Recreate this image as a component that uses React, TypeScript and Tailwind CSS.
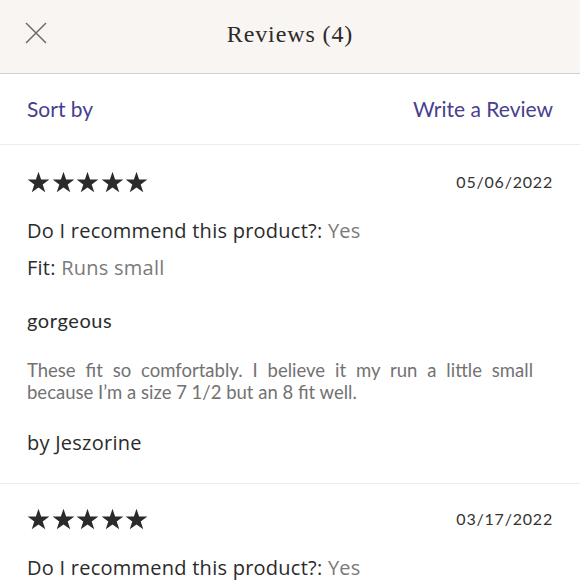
import React from "react";

const Star = () => (
  <svg width="23" height="22" viewBox="0 0 24 23" className="fill-[#2b2b2b]">
    <path d="M12 0.8l2.75 8.2h8.6l-6.95 5.1 2.65 8.2L12 17.2l-7.05 5.1 2.65-8.2L0.65 9h8.6z" />
  </svg>
);

const Stars = () => (
  <div className="flex gap-[1.5px]">
    <Star /><Star /><Star /><Star /><Star />
  </div>
);

const flare = { fontFamily: '"Open Sans", Lato, sans-serif' };

export default function App() {
  return (
    <div className="w-[580px] h-[580px] overflow-hidden bg-white" style={{ fontFamily: "Lato, sans-serif" }}>
      <div className="relative h-[74px] bg-[#f9f5f2] border-b border-[#cfcfcf] flex items-center justify-center">
        <svg className="absolute left-[25px] top-[22px]" width="22" height="22" viewBox="0 0 22 22" fill="none" stroke="#6b6b6b" strokeWidth="1.5">
          <path d="M1 1L21 21M21 1L1 21" />
        </svg>
        <span className="text-[24px] text-[#2b2b2b] tracking-[0.9px] pb-[6px]" style={{ fontFamily: '"Liberation Serif", serif' }}>Reviews (4)</span>
      </div>
      <div className="h-[71px] border-b border-[#ececec] flex items-center justify-between px-[27px] text-[21px] text-[#47408e]">
        <span>Sort by</span>
        <span>Write a Review</span>
      </div>
      <div className="px-[27px] border-b border-[#ececec] pt-[26px] pb-[27px]">
        <div className="flex items-center justify-between h-[22px]">
          <Stars />
          <span className="text-[16px] text-[#333] tracking-[0.8px]">05/06/2022</span>
        </div>
        <div className="mt-[25px] text-[20px] text-[#2b2b2b] leading-[26px] tracking-[0.25px]" style={flare}>
          Do I recommend this product?: <span className="text-[#7a7a7a]">Yes</span>
        </div>
        <div className="mt-[11px] text-[20px] text-[#2b2b2b] leading-[26px] tracking-[0.25px]" style={flare}>
          Fit: <span className="text-[#7a7a7a]">Runs small</span>
        </div>
        <div className="mt-[26px] text-[20px] text-[#2b2b2b] leading-[26px] tracking-[0.6px]">gorgeous</div>
        <div className="mt-[26px] w-[506px] text-justify text-[18.5px] text-[#727272] leading-[22px]">
          These fit so comfortably. I believe it my run a little small because I’m a size 7 1/2 but an 8 fit well.
        </div>
        <div className="mt-[27px] text-[20px] text-[#2b2b2b] leading-[26px] tracking-[0.25px]" style={flare}>by Jeszorine</div>
      </div>
      <div className="px-[27px] pt-[24px]">
        <div className="flex items-center justify-between h-[22px]">
          <Stars />
          <span className="text-[16px] text-[#333] tracking-[0.8px]">03/17/2022</span>
        </div>
        <div className="mt-[25px] text-[20px] text-[#2b2b2b] leading-[26px] tracking-[0.25px]" style={flare}>
          Do I recommend this product?: <span className="text-[#7a7a7a]">Yes</span>
        </div>
      </div>
    </div>
  );
}
